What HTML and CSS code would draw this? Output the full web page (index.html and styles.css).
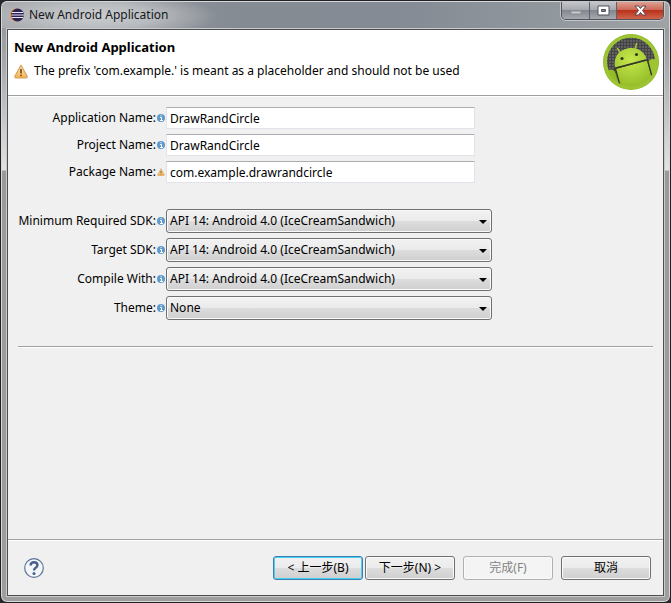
FILE: index.html
```html
<!DOCTYPE html>
<html lang="zh-Hant">
<head>
    <meta charset="UTF-8">
    <title>New Android Application</title>
    <link rel="stylesheet" href="styles.css">
</head>
<body>
    <svg class="defs" aria-hidden="true">
        <defs>
            <linearGradient id="amber" x1="0" y1="0" x2="0" y2="1">
                <stop offset="0" stop-color="#fff0c0"/>
                <stop offset="1" stop-color="#f4b050"/>
            </linearGradient>
            <radialGradient id="robot" cx="28" cy="26" r="32" gradientUnits="userSpaceOnUse">
                <stop offset="0" stop-color="#c6e84c"/>
                <stop offset="1" stop-color="#8cb522"/>
            </radialGradient>
            <pattern id="mesh" width="3" height="3" patternUnits="userSpaceOnUse">
                <rect width="3" height="3" fill="#444"/>
                <rect width="2" height="2" fill="#606060"/>
            </pattern>
            <clipPath id="disc"><circle cx="28" cy="28" r="26"/></clipPath>
            <symbol id="info" viewBox="0 0 8 8">
                <circle cx="4" cy="4" r="4" fill="#5f9acb"/>
                <path d="M3 3.5h1.5V6M3 6.5h3M3.5 1.7h1.2" fill="none" stroke="#fff" stroke-width="1"/>
            </symbol>
            <symbol id="warn" viewBox="0 0 14 15">
                <path d="M7 1.2 L13 12 Q13.6 14 12 14 H2 Q0.4 14 1 12 Z" fill="url(#amber)" stroke="#d8a05c" stroke-width="1.2" stroke-linejoin="round"/>
                <path d="M7 5V9.500M7 10.800V12.300" stroke="#70501c" stroke-width="1.700"/>
            </symbol>
        </defs>
    </svg>

    <div class="window">
        <div class="titlebar">
            <svg class="eclipse" width="14" height="14" viewBox="0 0 14 14">
                <circle cx="6.5" cy="7" r="6.5" fill="#f09030"/>
                <circle cx="7.5" cy="7" r="6.4" fill="#2c2255"/>
                <path d="M1.8 4.5H13M1.2 7H14M1.8 9.5H13" stroke="#e8e8f4" stroke-width="1.2"/>
            </svg>
            <span class="title">New Android Application</span>
            <div class="controls">
                <button class="min" aria-label="Minimize">
                    <svg width="12" height="5" viewBox="0 0 12 5"><rect x="1" y="1" width="10" height="3" fill="#c5c8ca" stroke="#8e9296"/></svg>
                </button>
                <button class="max" aria-label="Maximize">
                    <svg width="13" height="11" viewBox="0 0 13 11">
                        <path d="M1 1H12V10H1Z M4.500 4.500H8.500V6.500H4.500Z" fill="#fff" fill-rule="evenodd" stroke="#50535e"/>
                    </svg>
                </button>
                <button class="close" aria-label="Close">
                    <svg width="13" height="11" viewBox="0 0 13 11">
                        <path d="M1 1H4.500L6.500 3.500L8.500 1H12L8.500 5.500L12 10H8.500L6.500 7.500L4.500 10H1L4.500 5.500Z" fill="#fff" stroke="#5a4650"/>
                    </svg>
                </button>
            </div>
        </div>

        <div class="client">
            <header class="banner">
                <div class="heading">
                    <h1>New Android Application</h1>
                    <p class="message">
                        <svg width="14" height="15"><use href="#warn"/></svg>
                        The prefix 'com.example.' is meant as a placeholder and should not be used
                    </p>
                </div>
                <svg class="android" width="56" height="56" viewBox="0 0 56 56">
                    <circle cx="28" cy="28" r="28" fill="#8fb62c"/>
                    <circle cx="28" cy="28" r="26.500" fill="#a4ca39"/>
                    <circle cx="28" cy="27.500" r="24" fill="url(#mesh)"/>
                    <g clip-path="url(#disc)">
                        <path d="M14.500 14.500L18 20M33.500 9.500L32 16" stroke="#a4c639" stroke-width="1.500" stroke-linecap="round"/>
                        <path d="M12 33.500C10 23 16 16 25 14.300C34 12.600 42 18 43.500 25Z" fill="url(#robot)"/>
                        <path d="M12.300 35L44 26.500L52 56H16Z" fill="url(#robot)"/>
                        <path d="M3 42Q3 36 8 35.500Q11 35.500 12 38L17 56H3Z" fill="#94bd28"/>
                        <path d="M45 28.500Q46 25 50 25Q53 25 56 30V56H52Z" fill="#9cc530"/>
                        <path d="M11.500 34.500L44.500 25.800M12.500 35L17.500 53M44.500 26L50 46" stroke="#34391f" stroke-width="1.300" fill="none"/>
                        <circle cx="19" cy="24.500" r="1.600" fill="#34391f"/>
                        <circle cx="33.500" cy="20.500" r="1.600" fill="#34391f"/>
                    </g>
                    <circle cx="28" cy="28" r="26" fill="none" stroke="#9cc433" stroke-width="3"/>
                </svg>
            </header>

            <form class="wizard">
                <div class="fields">
                    <div class="row">
                        <label for="appName">Application Name:</label>
                        <svg class="hint"><use href="#info"/></svg>
                        <input type="text" id="appName" value="DrawRandCircle">
                    </div>
                    <div class="row">
                        <label for="projectName">Project Name:</label>
                        <svg class="hint"><use href="#info"/></svg>
                        <input type="text" id="projectName" value="DrawRandCircle">
                    </div>
                    <div class="row">
                        <label for="packageName">Package Name:</label>
                        <svg class="hint"><use href="#warn"/></svg>
                        <input type="text" id="packageName" value="com.example.drawrandcircle">
                    </div>
                </div>

                <div class="fields sdk">
                    <div class="row">
                        <label for="minSdk">Minimum Required SDK:</label>
                        <svg class="hint"><use href="#info"/></svg>
                        <div class="combo"><select id="minSdk"><option>API 14: Android 4.0 (IceCreamSandwich)</option></select></div>
                    </div>
                    <div class="row">
                        <label for="targetSdk">Target SDK:</label>
                        <svg class="hint"><use href="#info"/></svg>
                        <div class="combo"><select id="targetSdk"><option>API 14: Android 4.0 (IceCreamSandwich)</option></select></div>
                    </div>
                    <div class="row">
                        <label for="compileWith">Compile With:</label>
                        <svg class="hint"><use href="#info"/></svg>
                        <div class="combo"><select id="compileWith"><option>API 14: Android 4.0 (IceCreamSandwich)</option></select></div>
                    </div>
                    <div class="row">
                        <label for="theme">Theme:</label>
                        <svg class="hint"><use href="#info"/></svg>
                        <div class="combo"><select id="theme"><option>None</option></select></div>
                    </div>
                </div>

                <hr>
            </form>

            <footer class="buttons">
                <button class="help" aria-label="Help">
                    <svg width="20" height="20" viewBox="0 0 20 20">
                        <circle cx="10" cy="10" r="9.300" fill="#f4f6f8" stroke="#5b7396" stroke-width="1.200"/>
                        <path d="M6.600 7.500Q6.600 4.200 10 4.200T13.400 7.200Q13.400 8.800 11.700 9.800T10 12.600" fill="none" stroke="#47618c" stroke-width="2.400"/>
                        <circle cx="10" cy="15.500" r="1.500" fill="#47618c"/>
                    </svg>
                </button>
                <div class="nav">
                    <button class="btn focused">&lt; 上一步(B)</button>
                    <button class="btn">下一步(N) &gt;</button>
                </div>
                <button class="btn" disabled>完成(F)</button>
                <button class="btn">取消</button>
            </footer>
        </div>
    </div>
</body>
</html>
```

FILE: styles.css
```css
* { box-sizing: border-box; }
body { margin: 0; background: #26282c; color: #000; font-family: "Noto Sans", "Noto Sans CJK TC", sans-serif; font-size: 12px; line-height: 16px; }
button, input, select { font: inherit; color: inherit; margin: 0; }
.defs { position: absolute; width: 0; height: 0; }

.window {
    display: flex;
    flex-direction: column;
    min-height: 100vh;
    padding: 0 6px 6px;
    border: 1px solid #202226;
    border-radius: 7px;
    box-shadow: inset 0 0 0 1px #d5d7d9;
    background: linear-gradient(#8b9095 0, #a6a8ab 60px, #e2e2e2 169px, #9c9999 170px, #a09d9d 100%);
}

/* title bar */
.titlebar {
    display: flex;
    align-items: flex-start;
    height: 27px;
    margin: 0 -5px;
    padding: 0 5px 0 8px;
    background:
        radial-gradient(ellipse 120px 24px at 95px 14px, rgba(205, 208, 211, 0.95), rgba(195, 198, 201, 0.75) 50%, rgba(180, 184, 188, 0)),
        linear-gradient(90deg, #a5a7aa, #858b93 35%, #848b94 60%, #8f969c 80%, #9fa3a6);
    border-top: 1px solid #d5d7d9;
    border-radius: 6px 6px 0 0;
}
.eclipse { margin-top: 6px; }
.title { flex: 1; margin: 5px 0 0 5px; color: #16181b; }
.controls { display: flex; border: 1px solid #50535a; border-top: 0; border-radius: 0 0 5px 5px; box-shadow: 0 0 0 1px #c3c6c9; overflow: hidden; }
.controls button { display: flex; align-items: center; justify-content: center; height: 17px; padding: 0; border: 0; border-right: 1px solid #5c6068; background: linear-gradient(#c4c6ca, #a4a7ad 48%, #83878f 50%, #a6a9af); }
.controls .min { width: 28px; padding-top: 4px; }
.controls .max { width: 27px; }
.controls .close { width: 46px; border-right: 0; background: linear-gradient(#dda094, #cc6653 48%, #b8321d 50%, #d0644a); }

/* dialog */
.client { flex: 1; display: flex; flex-direction: column; border: 1px solid #4c4e52; box-shadow: 0 0 0 1px #c8cacc; background: #f0f0f0; margin-top: 1px; }
.banner { display: flex; justify-content: space-between; padding: 4px 4px 5px 6px; background: #fff; border-bottom: 1px solid #a0a0a0; box-shadow: 0 1px 0 #fff; }
.heading { padding-top: 5px; }
h1 { margin: 0; font-size: 13px; line-height: 16px; font-weight: bold; }
.message { display: flex; align-items: center; gap: 6px; margin: 8px 0 0; }

.wizard { flex: 1; padding: 11px 10px; }
.fields { display: flex; flex-direction: column; gap: 5px; }
.sdk { margin-top: 26px; }
.row { display: grid; grid-template-columns: 138px 8px minmax(0, 326px); column-gap: 1px; align-items: center; }
.row label { text-align: right; white-space: nowrap; }
.hint { width: 8px; height: 8px; }
.row input { width: calc(100% - 17px); height: 22px; padding: 0 3px; border: 1px solid #e2e3ea; border-top-color: #abadb3; border-radius: 1px; background: #fff; outline: none; }
.combo { position: relative; }
.combo::after { content: ""; position: absolute; right: 5px; top: 11px; border: 4px solid transparent; border-top-color: #000; border-bottom: 0; pointer-events: none; }
select { display: block; appearance: none; width: 100%; height: 24px; padding: 0 20px 0 3px; }
select, .btn { border: 1px solid #707070; border-radius: 3px; box-shadow: inset 0 0 0 1px #fafafa; background: linear-gradient(#f2f2f2, #ebebeb 48%, #dddddd 50%, #cfcfcf); outline: none; }
hr { height: 2px; margin: 26px 0 0; border: 0; border-top: 1px solid #a0a0a0; background: #fff; }

/* button bar */
.buttons { display: flex; align-items: center; gap: 8px; padding: 16px 12px 15px 16px; border-top: 1px solid #a0a0a0; box-shadow: inset 0 1px 0 #fff; }
.help { display: flex; margin-right: auto; padding: 0; border: 0; background: none; }
.nav { display: flex; gap: 2px; }
.btn { width: 90px; height: 24px; padding: 0; }
.btn.focused { border-color: #3c7fb1; box-shadow: inset 0 0 0 1px #48d0f5; }
.btn:disabled { border-color: #adb2b5; background: #f4f4f4; color: #838383; }
```
